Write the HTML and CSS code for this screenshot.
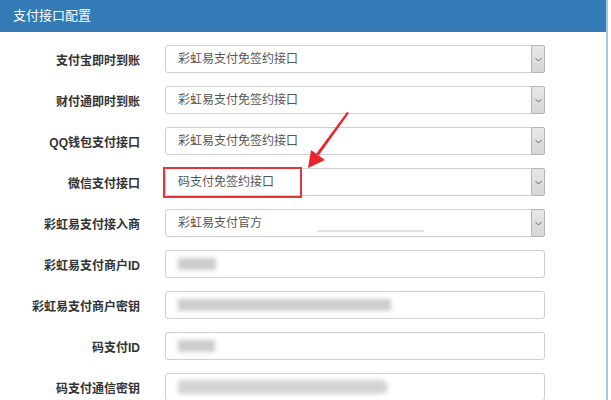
FILE: index.html
```html
<!DOCTYPE html>
<html lang="zh-CN">
<head>
    <meta charset="UTF-8">
    <title>支付接口配置</title>
    <link rel="stylesheet" href="styles.css">
</head>
<body>
    <div class="panel">
        <div class="panel-heading">支付接口配置</div>
        <div class="panel-body">
            <div class="form-row">
                <label class="label">支付宝即时到账</label>
                <div class="select">彩虹易支付免签约接口<span class="caret-box"><svg width="7" height="5" viewBox="0 0 7 5"><polyline points="0.5,1 3.5,4 6.5,1" fill="none" stroke="#666" stroke-width="1"/></svg></span></div>
            </div>
            <div class="form-row">
                <label class="label">财付通即时到账</label>
                <div class="select">彩虹易支付免签约接口<span class="caret-box"><svg width="7" height="5" viewBox="0 0 7 5"><polyline points="0.5,1 3.5,4 6.5,1" fill="none" stroke="#666" stroke-width="1"/></svg></span></div>
            </div>
            <div class="form-row">
                <label class="label">QQ钱包支付接口</label>
                <div class="select">彩虹易支付免签约接口<span class="caret-box"><svg width="7" height="5" viewBox="0 0 7 5"><polyline points="0.5,1 3.5,4 6.5,1" fill="none" stroke="#666" stroke-width="1"/></svg></span></div>
            </div>
            <div class="form-row">
                <label class="label">微信支付接口</label>
                <div class="select">码支付免签约接口<span class="caret-box"><svg width="7" height="5" viewBox="0 0 7 5"><polyline points="0.5,1 3.5,4 6.5,1" fill="none" stroke="#666" stroke-width="1"/></svg></span>
                    <div class="mark-box"></div>
                </div>
            </div>
            <div class="form-row">
                <label class="label">彩虹易支付接入商</label>
                <div class="select">彩虹易支付官方<span class="smudge"></span><span class="caret-box"><svg width="7" height="5" viewBox="0 0 7 5"><polyline points="0.5,1 3.5,4 6.5,1" fill="none" stroke="#666" stroke-width="1"/></svg></span></div>
            </div>
            <div class="form-row">
                <label class="label">彩虹易支付商户ID</label>
                <div class="input"><span class="blur" style="width: 38px"></span></div>
            </div>
            <div class="form-row">
                <label class="label">彩虹易支付商户密钥</label>
                <div class="input"><span class="blur" style="width: 213px"></span></div>
            </div>
            <div class="form-row">
                <label class="label">码支付ID</label>
                <div class="input"><span class="blur" style="width: 37px"></span></div>
            </div>
            <div class="form-row">
                <label class="label">码支付通信密钥</label>
                <div class="input"><span class="blur round" style="width: 210px"></span></div>
            </div>
        </div>

        <!-- 标注箭头 -->
        <svg class="pointer" width="611" height="400" viewBox="0 0 611 400">
            <polygon points="347,112 349,113 319,155 316,154" fill="#e8242c"/>
            <polygon points="308,168 311,150 325,160" fill="#e8242c"/>
        </svg>
    </div>
</body>
</html>
```

FILE: styles.css
```css
body {
    margin: 0;
    background: #fff;
    font-family: "Liberation Sans", "Noto Sans CJK SC", sans-serif;
    font-size: 12px;
    color: #333;
}

.panel {
    position: relative;
    width: 606px;
    height: 400px;
    border-right: 2px solid #a9c8e3;
    overflow: hidden;
}

.panel-heading {
    height: 32px;
    line-height: 31px;
    padding-left: 13px;
    background: #337ab7;
    color: #fff;
    font-size: 13px;
}

.panel-body {
    display: flex;
    flex-direction: column;
    gap: 13px;
    padding-top: 13px;
}

.form-row {
    display: flex;
    align-items: center;
    gap: 25px;
    height: 28px;
}

.label {
    width: 140px;
    text-align: right;
    font-weight: bold;
    color: #333;
}

.select, .input {
    position: relative;
    box-sizing: border-box;
    width: 380px;
    height: 28px;
    line-height: 26px;
    padding-left: 12px;
    border: 1px solid #cfcfcf;
    border-radius: 3px;
    color: #555;
    background: #fff;
}

.caret-box {
    position: absolute;
    top: -1px;
    right: -1px;
    width: 14px;
    height: 28px;
    box-sizing: border-box;
    border: 1px solid #b5b5b5;
    border-radius: 2px;
    background: linear-gradient(#e8e8e8, #d6d6d6);
    display: flex;
    align-items: center;
    justify-content: center;
}

.mark-box {
    position: absolute;
    left: -3px;
    top: -2px;
    width: 139px;
    height: 31px;
    box-sizing: border-box;
    border: 2px solid #e3343c;
}

.smudge {
    position: absolute;
    left: 151px;
    top: 20px;
    width: 107px;
    height: 2px;
    background: #e2e2e2;
    filter: blur(0.6px);
}

.input {
    display: flex;
    align-items: center;
}

.blur {
    display: block;
    height: 12px;
    background: #cdcdcd;
    filter: blur(2px);
}

.blur.round {
    height: 14px;
    border-radius: 0 8px 8px 0;
    background: #d4d4d4;
}

.pointer {
    position: absolute;
    left: 0;
    top: 0;
    pointer-events: none;
}
```
